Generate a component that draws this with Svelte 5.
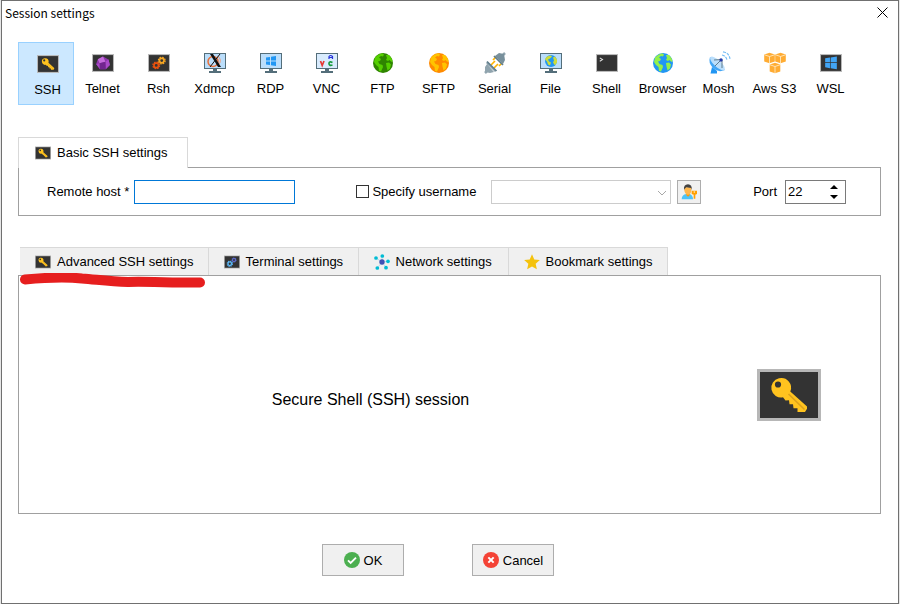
<script lang="ts">
	type Item = { label: string; icon: string };

	const sessions: Item[] = [
		{ label: 'SSH', icon: 'key' },
		{ label: 'Telnet', icon: 'gem' },
		{ label: 'Rsh', icon: 'gears' },
		{ label: 'Xdmcp', icon: 'xorg' },
		{ label: 'RDP', icon: 'rdp' },
		{ label: 'VNC', icon: 'vnc' },
		{ label: 'FTP', icon: 'globe-green' },
		{ label: 'SFTP', icon: 'globe-orange' },
		{ label: 'Serial', icon: 'plug' },
		{ label: 'File', icon: 'file' },
		{ label: 'Shell', icon: 'prompt' },
		{ label: 'Browser', icon: 'globe-blue' },
		{ label: 'Mosh', icon: 'dish' },
		{ label: 'Aws S3', icon: 'cubes' },
		{ label: 'WSL', icon: 'windows' }
	];

	const tabs: Item[] = [
		{ label: 'Advanced SSH settings', icon: 'key' },
		{ label: 'Terminal settings', icon: 'gears-blue' },
		{ label: 'Network settings', icon: 'network' },
		{ label: 'Bookmark settings', icon: 'star' }
	];

	const framed = ['key', 'gem', 'gears', 'gears-blue', 'prompt', 'windows'];
	const monitors = ['xorg', 'rdp', 'vnc', 'file'];

	// ocean, land
	const globes: Record<string, string[]> = {
		'globe-green': ['#2f8500', '#55cf00'],
		'globe-orange': ['#ff8a00', '#ffc400'],
		'globe-blue': ['#2196f3', '#93f04b']
	};

	let selected = $state('SSH');
	let host = $state('');
	let port = $state(22);
	let withUser = $state(false);
</script>

{#snippet gear(x: number, y: number, r: number, color: string)}
	<svg {x} {y} width={r * 2} height={r * 2} viewBox="-10 -10 20 20">
		<circle r="5.5" fill="none" stroke={color} stroke-width="4" />
		<circle r="8.2" fill="none" stroke={color} stroke-width="3.4" stroke-dasharray="3.8 2.64" />
	</svg>
{/snippet}

{#snippet icon(name: string)}
	{#if framed.includes(name)}
		<svg class="framed" viewBox="0 0 64 52" aria-hidden="true">
			<rect width="64" height="52" fill="#b7b7b7" />
			<rect x="3" y="3" width="58" height="46" fill="#333333" />
			{#if name === 'key'}
				<path
					fill="#ffc31f"
					fill-rule="evenodd"
					d="M22 9.300a9.700 9.700 0 0 0 4 19l2.500 3.200 3.500-.2.500 4H36l.5 4h4v3.700h7.500l2-3.200v-2.300L33.300 22.500A9.700 9.700 0 0 0 22 9.300zM21 12.400a3.100 3.100 0 1 1 0 6.200 3.100 3.100 0 0 1 0-6.200z"
				/>
				<path d="M31.500 25l16 15.500" stroke="#dca11d" stroke-width="1.600" />
			{:else if name === 'gem'}
				<path fill="#8e35ad" d="M32 7l16 9 4 16-12 12H23L12 29l5-14z" />
				<path fill="#c46bdc" d="M32 7l7 15-17 5-5-12z" />
				<path fill="#a94ac8" d="M39 22l9-6 4 16-12 12zM12 29l10-2 1 17z" />
				<path fill="#71258f" d="M22 27l17-5 1 22H23z" />
			{:else if name === 'gears'}
				{@render gear(28, 7, 12, '#f5a623')}
				{@render gear(12, 21, 12, '#e8520e')}
			{:else if name === 'gears-blue'}
				{@render gear(29, 7, 11, '#6272dc')}
				{@render gear(10, 20, 13, '#5cb8f8')}
			{:else if name === 'prompt'}
				<path d="M11 11l8 5-8 5" fill="none" stroke="#e4e4e4" stroke-width="3" />
			{:else}
				<path
					fill="#42a5f5"
					d="M15 12l14-2v14H15zM31 10l18-3v17H31zM15 26h14v15l-14-3zM31 26h18v18l-18-3z"
				/>
			{/if}
		</svg>
	{:else if monitors.includes(name)}
		<svg class="glyph" viewBox="0 0 24 24" aria-hidden="true">
			<rect x="1" y="2" width="22" height="16" fill="#546e7a" />
			<rect x="2" y="3" width="20" height="14" fill="#bbdefb" />
			<path d="M10 18h4v2h4v2H6v-2h4z" fill="#546e7a" />
			{#if name === 'xorg'}
				<circle cx="10" cy="10.500" r="5" fill="none" stroke="#e8703a" stroke-width="1.500" />
				<path d="M14 5a5 5 0 0 1 1 9" fill="none" stroke="#f0a080" />
				<path d="M7 3h3l8 13h-3z" fill="#111" />
				<path d="M17 3L7 16" stroke="#111" />
			{:else if name === 'rdp'}
				<path
					fill="#2196f3"
					d="M7 6.500l4-.5v3.500H7zM12 5.800l5-.8v4.500h-5zM7 10.500h4V14l-4-.5zM12 10.500h5V15l-5-.8z"
				/>
			{:else if name === 'vnc'}
				<rect x="2" y="3" width="20" height="14" fill="#d8ebfd" />
				<path d="M5.500 10l1.700 4.500L9 10" fill="none" stroke="#e53935" stroke-width="1.700" />
				<path d="M14 8V5.500q1.500-2 3.500 0V8M14 6.500h3.500" fill="none" stroke="#2632d8" stroke-width="1.200" />
				<path d="M17.500 11.500q-3.500-1.500-3.500 1t3.500 1.500" fill="none" stroke="#159a3c" stroke-width="1.700" />
			{:else}
				<circle cx="12" cy="10" r="6" fill="#2196f3" />
				<path
					fill="#cddc39"
					d="M7 6.500q2-2 5-2l1 1-2 2-2 1 1 2 2 1-1 3-2-1-1-3-2-2zM14 6.500l2-1 2 3v3l-2 3-2-3 1-2z"
				/>
			{/if}
		</svg>
	{:else if globes[name]}
		<svg class="glyph" viewBox="0 0 24 24" aria-hidden="true">
			<circle cx="12" cy="12" r="10" fill={globes[name][0]} />
			<path
				fill={globes[name][1]}
				d="M4 6.500Q7 3 11 2.200l2 1.300-1 2-2-.5-2 1.500 2 1.500-1 2-2 .5 1.500 2.500 3 1 .5 2-2 4.500-2-.5-.5-4L5 14l-2-3zM15 4l3 0q3 3 3.500 6l-1 1-2-2-1.500 1L15 9l1-2zM15 12l3-.5 2 2-1 4-2.500 2-1-4z"
			/>
		</svg>
	{:else}
		<svg class="glyph" viewBox="0 0 24 24" aria-hidden="true">
			{#if name === 'plug'}
				<path d="M2 22l4-4M18 6l4-4" stroke="#90a4ae" stroke-width="2.500" />
				<path d="M10 9l4-4M16 15l3-3M8 14l4-4M11 17l4-4" stroke="#ffb300" stroke-width="1.700" />
				<path d="M4 13l7 8-4 1-5-1v-5zM4 11l9 9-1 1-9-9z" fill="#90a4ae" />
				<path d="M12 5l8 8 2-4-1-6-5-1z" fill="#78909c" />
				<path d="M4 10.500L13.500 20M11 5l9 9" stroke="#607d8b" stroke-width="1.700" />
			{:else if name === 'dish'}
				<path d="M5 16l5 4v2.500H3.500z" fill="#2196f3" />
				<path d="M3 6q-2 6 3 11t12 2z" fill="#42a5f5" />
				<ellipse cx="10.500" cy="12.500" rx="9.500" ry="3.500" transform="rotate(42 10.500 12.500)" fill="#bbdefb" />
				<path d="M8 15l6-6M7 9l8-.5V17" fill="none" stroke="#607d8b" />
				<circle cx="14" cy="9" r="1.700" fill="#233ba8" />
				<path
					d="M15 4q4 1 5 5M16 .8q6 1 7 7"
					fill="none"
					stroke="#75bdf6"
					stroke-width="1.200"
					stroke-dasharray="3 1"
				/>
			{:else if name === 'cubes'}
				{#each [[6.5, 7], [17.5, 7], [12, 17]] as [x, y]}
					<path
						transform="translate({x} {y})"
						d="M0-5.200L5.300-3.500v7L0 5.200l-5.300-1.700v-7z"
						fill="#ffac33"
					/>
					<path
						transform="translate({x} {y})"
						d="M-5-3.200L0-1.500l5-1.700M0-1.500V5"
						fill="none"
						stroke="#fff0d2"
						stroke-width=".8"
					/>
				{/each}
			{:else if name === 'network'}
				<path
					d="M12 12L3 6M12 12V3M12 12l9-1M12 12l6 8M12 12l-7 9"
					stroke="#a8d8ea"
					stroke-width="1.200"
				/>
				<g fill="#00bcd4">
					<circle cx="3" cy="6" r="2.800" />
					<circle cx="12.500" cy="3" r="2.800" />
					<circle cx="21" cy="11" r="2.800" />
					<circle cx="18" cy="20.500" r="2.800" />
					<circle cx="5" cy="21" r="2.800" />
				</g>
				<circle cx="12" cy="12" r="4" fill="#3f51b5" />
			{:else if name === 'star'}
				<path
					d="M12 .5l3.400 7.700 8.400.9-6.300 5.600 1.800 8.300L12 18.700 4.700 23l1.800-8.300L.2 9.100l8.400-.9z"
					fill="#f4c20d"
				/>
			{:else if name === 'user'}
				<path d="M1 23q0-7 7-8h4q6 1 6 8z" fill="#4fc3f7" />
				<path d="M8 13h5v4l-2.500 2L8 17z" fill="#ff9800" />
				<path d="M5 5h10.500v5q-1 6-5 6T5 10z" fill="#ffb74d" />
				<path d="M4.500 9q-1-8 6-8.500Q17 1 16 9l-1-3-7-1-2.500 2z" fill="#424242" />
				<path d="M16 10h8v5l-2.500 1v6h-2.500v-6L16 15z" fill="#ffa000" />
				<path d="M19 12h2" stroke="#fff" stroke-width="1.500" />
			{:else if name === 'ok'}
				<circle cx="12" cy="12" r="12" fill="#4caf50" />
				<path d="M6 12.500l4 4 8-8" fill="none" stroke="#fff" stroke-width="2.800" />
			{:else if name === 'cancel'}
				<circle cx="12" cy="12" r="12" fill="#f44336" />
				<path d="M8 8l8 8M16 8l-8 8" stroke="#fff" stroke-width="3" />
			{/if}
		</svg>
	{/if}
{/snippet}

<div class="dialog">
	<header class="titlebar">
		<span>Session settings</span>
		<button class="close" aria-label="Close">
			<svg viewBox="0 0 11 11"><path d="M.5.5l10 10M10.500.5l-10 10" stroke="#000" /></svg>
		</button>
	</header>

	<div class="body">
		<nav class="sessions">
			{#each sessions as session}
				<button
					class="session"
					class:selected={selected === session.label}
					onclick={() => (selected = session.label)}
				>
					<span class="picture">{@render icon(session.icon)}</span>
					{session.label}
				</button>
			{/each}
		</nav>

		<section class="basic">
			<h2 class="basic-tab">
				<span class="small">{@render icon('key')}</span>
				Basic SSH settings
			</h2>
			<form class="panel fields">
				<div class="field remote">
					<label for="host">Remote host *</label>
					<input id="host" type="text" bind:value={host} />
				</div>
				<div class="field user">
					<label class="check">
						<input type="checkbox" bind:checked={withUser} />
						Specify username
					</label>
					<span class="combo">
						<select aria-label="Username" disabled={!withUser}>
							<option></option>
						</select>
						<svg viewBox="0 0 10 6"><path d="M1 1l4 4 4-4" fill="none" stroke="#a8a8a8" /></svg>
					</span>
					<button class="manage" type="button" aria-label="Manage users">
						<span class="small">{@render icon('user')}</span>
					</button>
				</div>
				<div class="field port">
					<label for="port">Port</label>
					<span class="spin">
						<input id="port" type="text" inputmode="numeric" bind:value={port} />
						<span class="arrows">
							<button type="button" aria-label="Increase port" onclick={() => port++}>
								<svg viewBox="0 0 8 4"><path d="M4 0l4 4H0z" /></svg>
							</button>
							<button type="button" aria-label="Decrease port" onclick={() => port--}>
								<svg viewBox="0 0 8 4"><path d="M0 0h8L4 4z" /></svg>
							</button>
						</span>
					</span>
				</div>
			</form>
		</section>

		<section class="advanced">
			<div class="tabs">
				{#each tabs as tab}
					<button class="tab">
						<span class="small">{@render icon(tab.icon)}</span>
						{tab.label}
					</button>
				{/each}
			</div>
			<svg class="marker" viewBox="0 0 186 16" aria-hidden="true">
				<path d="M5 6.500C26 4.500 48 4 62 5.500C80 7 90 8.500 108 9C125 8 140 10 180 9.500" />
			</svg>
			<div class="panel summary">
				<p>Secure Shell (SSH) session</p>
				<span class="large">{@render icon('key')}</span>
			</div>
		</section>

		<footer class="actions">
			<button><span class="small">{@render icon('ok')}</span>OK</button>
			<button><span class="small">{@render icon('cancel')}</span>Cancel</button>
		</footer>
	</div>
</div>

<style>
	:global(body) {
		background: #e6e6e6;
	}

	.dialog {
		display: flex;
		flex-direction: column;
		box-sizing: border-box;
		min-height: 100vh;
		margin: 0 1px;
		border: 1px solid #707070;
		background: white;
		color: black;
		font-family: 'Liberation Sans', Arial, sans-serif;
		font-size: 13px;
		line-height: 17px;
	}

	.dialog * {
		box-sizing: border-box;
	}

	button,
	input,
	select {
		margin: 0;
		padding: 0;
		border: none;
		border-radius: 0;
		background: none;
		color: inherit;
		font: inherit;
	}

	svg {
		display: block;
	}

	.titlebar {
		display: flex;
		align-items: center;
		justify-content: space-between;
		height: 22px;
		padding: 0 10px 0 3px;
		font-family: 'Noto Sans CJK KR', sans-serif;
		font-size: 12px;
	}

	.close svg {
		width: 11px;
		height: 11px;
	}

	.body {
		display: flex;
		flex: 1;
		flex-direction: column;
		padding: 19px 17px 27px 16px;
	}

	.sessions {
		display: flex;
	}

	.session {
		display: flex;
		flex-direction: column;
		align-items: center;
		gap: 5px;
		width: 56px;
		height: 63px;
		padding: 9px 0 0 1px;
		line-height: 18px;
		white-space: nowrap;
	}

	.session.selected {
		padding: 9px 0 0 3px;
		border: 1px solid #99d1ff;
		background: #cce8ff;
	}

	.picture {
		display: flex;
		align-items: center;
		justify-content: center;
		width: 24px;
		height: 24px;
	}

	.picture .framed {
		width: 22px;
		height: 18px;
	}

	.picture .glyph {
		width: 24px;
		height: 24px;
	}

	.small > :global(svg) {
		width: 16px;
		height: 16px;
	}

	.panel {
		border: 1px solid #a0a0a0;
	}

	.basic {
		margin-top: 32px;
	}

	.basic-tab {
		display: flex;
		position: relative;
		align-items: center;
		gap: 6px;
		width: fit-content;
		min-width: 170px;
		height: 31px;
		margin: 0 0 -1px;
		padding: 0 16px;
		border: 1px solid #d9d9d9;
		border-bottom: none;
		background: white;
		font-size: 13px;
		font-weight: normal;
		line-height: 16px;
	}

	.fields {
		display: flex;
		align-items: center;
		height: 49px;
		padding: 0 34px 0 28px;
	}

	.field {
		display: flex;
		align-items: center;
	}

	.remote {
		gap: 5px;
	}

	.remote input {
		width: 161px;
		height: 24px;
		padding: 0 3px;
		border: 1px solid #0078d7;
		outline: none;
	}

	.user {
		flex: 1;
		margin: 0 52px 0 61px;
	}

	.check {
		display: flex;
		align-items: center;
		gap: 3px;
		margin-right: 15px;
	}

	.check input {
		appearance: none;
		width: 13px;
		height: 13px;
		border: 1px solid #333333;
	}

	.check input:checked {
		background: #333333;
		box-shadow: inset 0 0 0 2px white;
	}

	.combo {
		display: flex;
		position: relative;
		flex: 1;
	}

	.combo select {
		appearance: none;
		width: 100%;
		height: 24px;
		border: 1px solid #cccccc;
		opacity: 1;
	}

	.combo svg {
		position: absolute;
		top: 10px;
		right: 4px;
		width: 10px;
		height: 6px;
		pointer-events: none;
	}

	.manage {
		display: flex;
		align-items: center;
		justify-content: center;
		width: 24px;
		height: 24px;
		margin-left: 6px;
		border: 1px solid #adadad;
		background: #f0f0f0;
	}

	.port {
		gap: 8px;
	}

	.spin {
		display: flex;
		width: 61px;
		height: 24px;
		border: 1px solid #7a7a7a;
	}

	.spin input {
		flex: 1;
		min-width: 0;
		padding-left: 2px;
		outline: none;
	}

	.arrows {
		display: flex;
		flex-direction: column;
		justify-content: center;
		gap: 6px;
		margin-right: 7px;
	}

	.arrows svg {
		width: 8px;
		height: 4px;
	}

	.advanced {
		display: flex;
		position: relative;
		flex: 1;
		flex-direction: column;
		margin-top: 31px;
	}

	.tabs {
		display: flex;
		padding-left: 2px;
	}

	.tab {
		display: flex;
		align-items: center;
		gap: 6px;
		min-width: 150px;
		height: 28px;
		padding: 0 14px 0 15px;
		border-top: 1px solid #d9d9d9;
		border-right: 1px solid #d9d9d9;
		background: #f0f0f0;
		line-height: 18px;
		white-space: nowrap;
	}

	/* hand-drawn underline over the first tab */
	.marker {
		position: absolute;
		top: 26px;
		left: 2px;
		width: 186px;
		height: 16px;
		pointer-events: none;
	}

	.marker path {
		fill: none;
		stroke: #e61e1e;
		stroke-width: 10;
		stroke-linecap: round;
	}

	.summary {
		display: flex;
		flex: 1;
		align-items: center;
		gap: 35px;
		padding-right: 59px;
	}

	.summary p {
		flex: 1;
		margin: 0;
		padding-top: 10px;
		font-size: 16px;
		text-align: center;
	}

	.large svg {
		width: 64px;
		height: 52px;
	}

	.actions {
		display: flex;
		justify-content: center;
		gap: 68px;
		margin-top: 30px;
		padding-right: 23px;
	}

	.actions button {
		display: flex;
		align-items: center;
		justify-content: center;
		gap: 4px;
		width: 82px;
		height: 32px;
		border: 1px solid #adadad;
		background: #f0f0f0;
	}
</style>
